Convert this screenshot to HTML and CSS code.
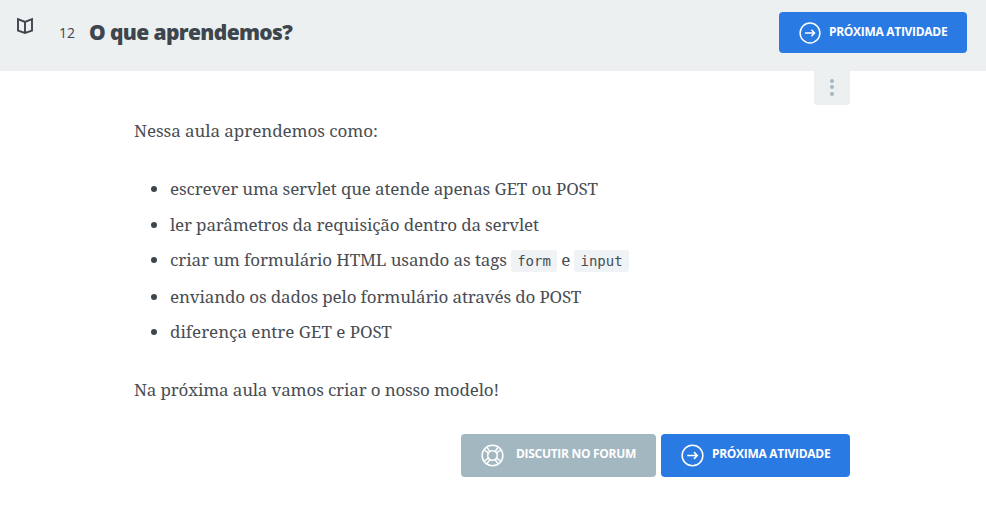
FILE: index.html
```html
<!DOCTYPE html>
<html lang="pt-BR">
<head>
<meta charset="utf-8">
<title>O que aprendemos?</title>
<link rel="stylesheet" href="styles.css">
</head>
<body>
<header class="task-header">
  <svg class="book" viewBox="0 0 18 18"><path d="M2 2.200 9 5l7-2.800v11.400L9 15.900l-7-2.300zM9 5v10.900"/></svg>
  <span class="number">12</span>
  <h1 class="title">O que aprendemos?</h1>
  <a class="button next-top"><svg class="icon" viewBox="0 0 24 24"><circle cx="12" cy="12" r="10.800"/><path d="M6.500 12h10.500M13.500 8.500l3.500 3.500-3.500 3.500"/></svg><span class="label">PRÓXIMA ATIVIDADE</span></a>
</header>
<main class="content">
  <div class="menu"><i></i><i></i><i></i></div>
  <p class="intro">Nessa aula aprendemos como:</p>
  <ul class="topics">
    <li>escrever uma servlet que atende apenas GET ou POST</li>
    <li>ler parâmetros da requisição dentro da servlet</li>
    <li>criar um formulário HTML usando as tags <code>form</code> e <code>input</code></li>
    <li>enviando os dados pelo formulário através do POST</li>
    <li>diferença entre GET e POST</li>
  </ul>
  <p class="outro">Na próxima aula vamos criar o nosso modelo!</p>
  <div class="actions">
    <a class="button forum"><svg class="icon" viewBox="0 0 24 24"><circle cx="12" cy="12" r="10.800"/><circle cx="12" cy="12" r="5"/><path d="M3.200 6l5.300 3.800M6 3.200l3.800 5.300M20.800 6l-5.300 3.800M18 3.200l-3.800 5.300M3.200 18l5.300-3.800M6 20.800l3.800-5.300M20.800 18l-5.300-3.800M18 20.800l-3.800-5.300"/></svg><span class="label">DISCUTIR NO FORUM</span></a>
    <a class="button next"><svg class="icon" viewBox="0 0 24 24"><circle cx="12" cy="12" r="10.800"/><path d="M6.500 12h10.500M13.500 8.500l3.500 3.500-3.500 3.500"/></svg><span class="label">PRÓXIMA ATIVIDADE</span></a>
  </div>
</main>
</body>
</html>
```
FILE: styles.css
```css
* { box-sizing: border-box; }
body { margin: 0; background: #fff; color: #3d464d; font-family: "Open Sans", sans-serif; }
.task-header { display: flex; align-items: flex-start; height: 71px; background: #ecf0f1; padding: 12px 19px 0 16px; }
.book { width: 18px; height: 18px; margin-top: 5px; fill: none; stroke: #3d464d; stroke-width: 1.9; }
.number { margin: 11px 0 0 25px; font-size: 14px; line-height: 20px; }
.title { margin: 6px 0 0 14px; font-size: 21px; line-height: 28px; font-weight: 800; letter-spacing: -.63px; }
.button { display: flex; align-items: center; height: 43px; border-radius: 4px; background: #2a7ae4; color: #fff; font-size: 12px; font-weight: 700; letter-spacing: -.3px; white-space: nowrap; }
.icon { width: 23px; height: 23px; fill: none; stroke: #fff; stroke-width: 1.6; flex: none; }
.label { padding-bottom: 4px; }
.next-top { width: 188px; height: 41px; margin-left: auto; padding-left: 20px; gap: 8px; }
.next-top .icon { width: 22px; height: 22px; }
.next-top .label { padding-bottom: 2px; }
.content { width: 716px; margin: 0 0 0 134px; font-family: "Source Serif Pro", "Noto Serif", "Liberation Serif", serif; font-size: 17px; color: #484d53; }
.menu { display: flex; flex-direction: column; align-items: center; gap: 2.500px; width: 36px; height: 34px; padding-top: 7.500px; margin-left: auto; background: #ecf0f1; border-radius: 0 0 3px 3px; }
.menu i { width: 4px; height: 4px; border-radius: 50%; background: #a2b7c0; }
p { margin: 0; line-height: 36px; }
.intro { margin-top: 8px; letter-spacing: -.06px; }
.outro { letter-spacing: -.165px; }
.topics { margin: 22px 0; padding-left: 36px; }
.topics li { height: 36px; line-height: 36px; white-space: nowrap; letter-spacing: -.14px; }
.topics li::marker { color: #3d464d; }
.topics li:nth-child(2) { height: 35px; letter-spacing: -.17px; }
.topics li:nth-child(3) { height: 37px; letter-spacing: -.11px; }
.topics li:nth-child(4) { height: 35px; }
.topics li:last-child { letter-spacing: -.03px; }
code { font: 14px/20px "DejaVu Sans Mono", monospace; letter-spacing: 0; padding: 3px 6px; background: #eff3f6; border-radius: 3px; }
.actions { display: flex; justify-content: flex-end; gap: 5px; margin-top: 26px; font-family: "Open Sans", sans-serif; }
.forum { width: 195px; background: #a2b7c0; padding-left: 20px; gap: 12px; }
.next { width: 189px; padding-left: 20px; gap: 8px; }
```
